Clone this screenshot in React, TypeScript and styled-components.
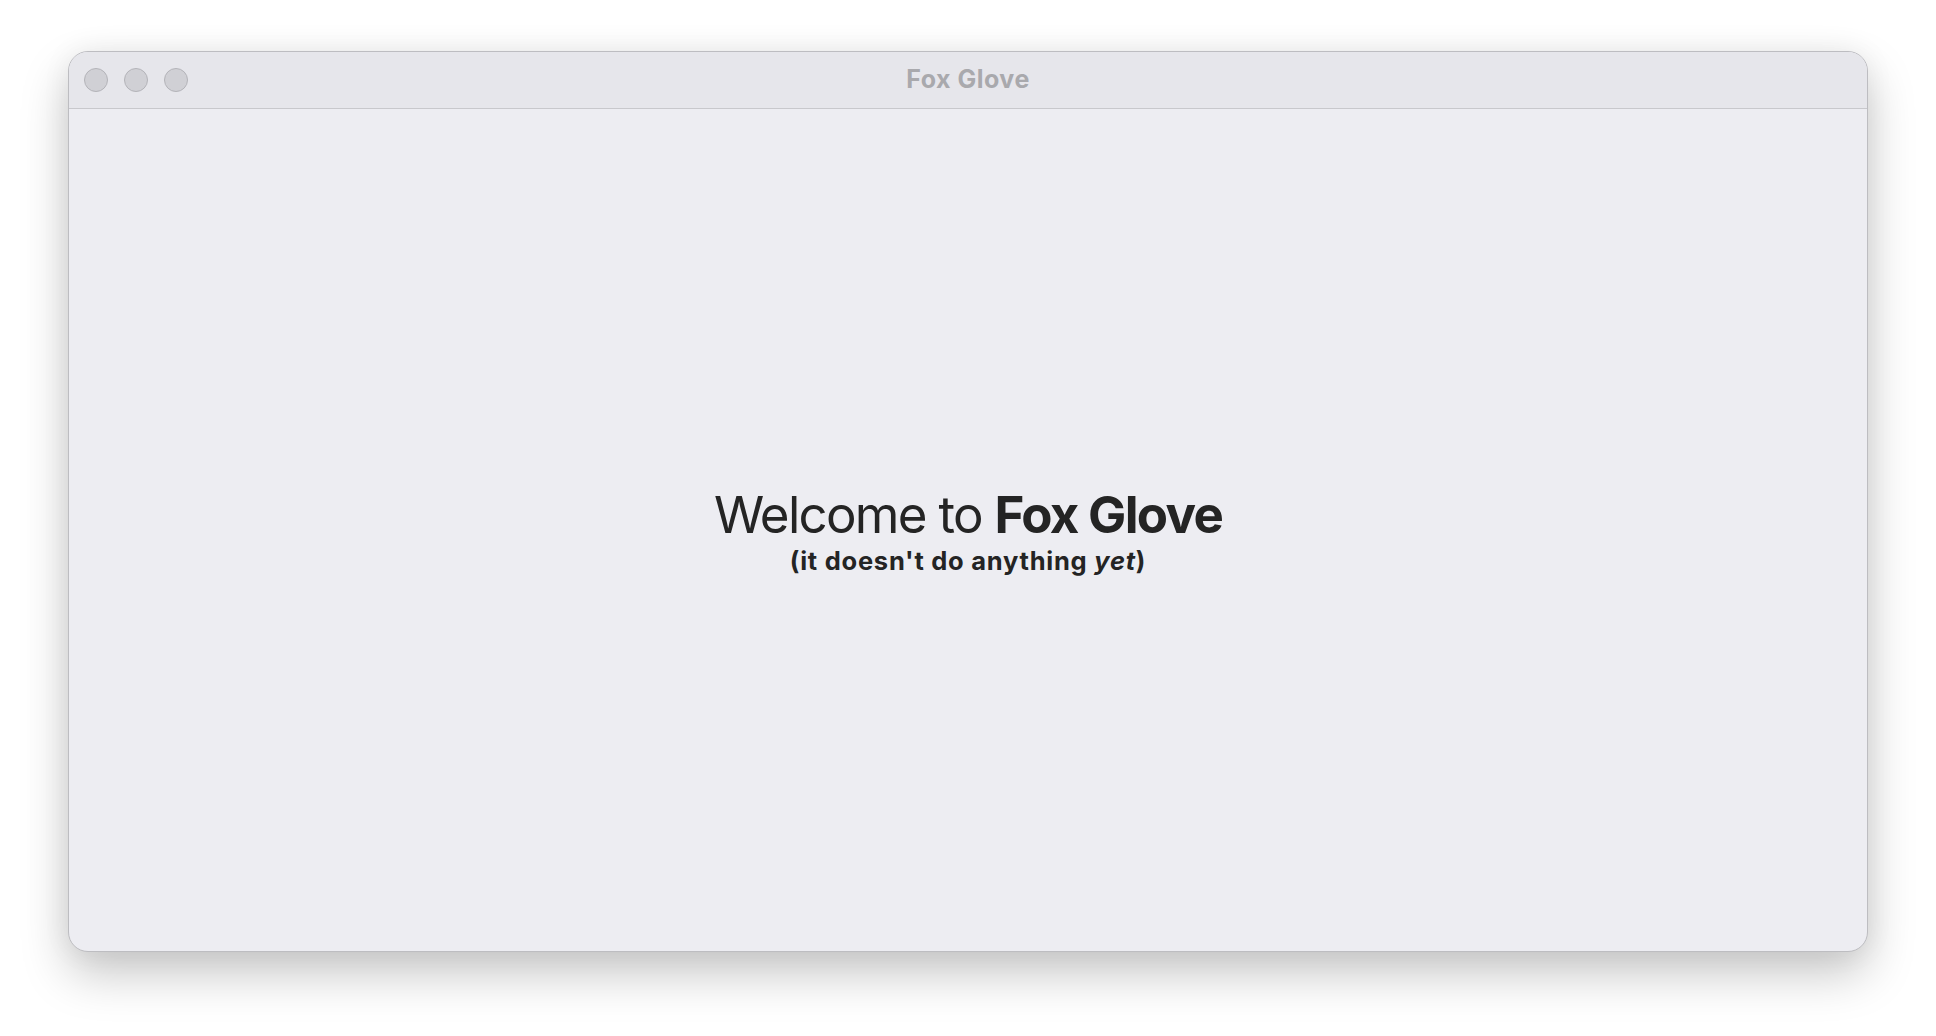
import React from "react";
import styled, { createGlobalStyle } from "styled-components";

const Global = createGlobalStyle`
  html, body {
    margin: 0;
    padding: 0;
    background: #ffffff;
    font-family: Inter, "Noto Sans", "Liberation Sans", sans-serif;
  }
  * { box-sizing: border-box; }
`;

const Page = styled.div`
  width: 1936px;
  height: 1036px;
  padding: 51px 0 0 68px;
  background: #ffffff;
`;

const Window = styled.div`
  width: 1800px;
  height: 901px;
  border-radius: 20px;
  border: 1px solid #bdbdc1;
  background: #ededf2;
  overflow: hidden;
  display: flex;
  flex-direction: column;
  box-shadow: 0 22px 48px rgba(0, 0, 0, 0.22), 0 0 30px rgba(0, 0, 0, 0.06);
`;

const TitleBar = styled.div`
  position: relative;
  height: 57px;
  flex: none;
  background: #e6e6eb;
  border-bottom: 1px solid #c8c8cc;
  display: flex;
  align-items: center;
  justify-content: center;
`;

const Lights = styled.div`
  position: absolute;
  left: 15px;
  top: 16px;
  display: flex;
  gap: 16px;
`;

const Light = styled.span`
  width: 24px;
  height: 24px;
  border-radius: 50%;
  background: #d0d0d5;
  border: 1px solid #b3b3b8;
`;

const Title = styled.div`
  font-size: 25px;
  font-weight: 700;
  color: #a9a9ad;
  letter-spacing: 0.5px;
  margin-top: -3px;
`;

const Content = styled.div`
  flex: 1;
  display: flex;
  flex-direction: column;
  align-items: center;
  justify-content: center;
  color: #242424;
`;

const Heading = styled.h1`
  margin: 0;
  font-size: 51px;
  font-weight: 400;
  line-height: 60px;
  letter-spacing: -1.7px;
`;

const Strong = styled.b`
  font-weight: 700;
`;

const Sub = styled.p`
  margin: 2px 0 0;
  font-size: 25.5px;
  font-weight: 700;
  line-height: 28px;
  letter-spacing: 0.75px;
`;

export default function App() {
  return (
    <>
      <Global />
      <Page>
        <Window>
          <TitleBar>
            <Lights>
              <Light />
              <Light />
              <Light />
            </Lights>
            <Title>Fox Glove</Title>
          </TitleBar>
          <Content>
            <Heading>
              Welcome to <Strong>Fox Glove</Strong>
            </Heading>
            <Sub>
              (it doesn't do anything <i>yet</i>)
            </Sub>
          </Content>
        </Window>
      </Page>
    </>
  );
}
